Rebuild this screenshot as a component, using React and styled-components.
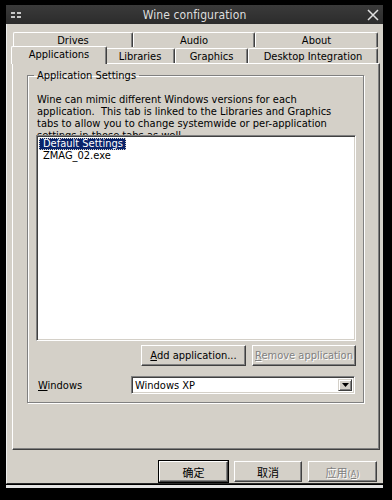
import React from "react";
import styled, { createGlobalStyle } from "styled-components";

const GlobalStyle = createGlobalStyle`
  html, body {
    margin: 0;
    padding: 0;
    background: #000;
  }
  body {
    font-family: "DejaVu Sans Condensed", "DejaVu Sans", sans-serif;
    font-size: 11px;
    color: #000;
  }
`;

const Window = styled.div`
  width: 377px;
  margin: 5px 0 0 6px;
`;

const TitleBar = styled.div`
  height: 19px;
  display: flex;
  align-items: center;
  justify-content: space-between;
  padding: 0 4px 0 5px;
  background: linear-gradient(#3a3a3a, #2c2c2c);
  color: #dedede;
  font-size: 12px;
`;

const TitleText = styled.div`
  flex: 1;
  text-align: center;
  letter-spacing: 0.1px;
`;

const Body = styled.div`
  height: 460px;
  box-sizing: border-box;
  background: #d4d0c8;
  padding: 8px 3px 0 5px;
  border-left: 1px solid #ececec;
  border-bottom: 1px solid #2a2a2a;
  display: flex;
  flex-direction: column;
`;

const BottomStrip = styled.div`
  height: 3px;
  margin-top: 1px;
  background: #e4e4e4;
`;

const TabRow = styled.div`
  display: flex;
  align-items: flex-end;
  padding-left: ${(p) => p.$indent}px;
  height: ${(p) => p.$height}px;
  position: relative;
  z-index: ${(p) => p.$z};
`;

const Tab = styled.div`
  width: ${(p) => p.$w}px;
  height: ${(p) => (p.$active ? 18 : 15)}px;
  box-sizing: border-box;
  background: #d4d0c8;
  border-top: 1px solid #fff;
  border-left: 1px solid #fff;
  border-right: 1px solid #404040;
  box-shadow: inset -1px 0 0 #808080;
  border-radius: 2px 2px 0 0;
  display: flex;
  align-items: center;
  justify-content: center;
  padding-bottom: ${(p) => (p.$active ? 2 : 0)}px;
  margin: 0 ${(p) => (p.$active ? -2 : 0)}px ${(p) => (p.$active ? -1 : 0)}px;
  position: relative;
  z-index: ${(p) => (p.$active ? 2 : 1)};
`;

const Pane = styled.div`
  height: 387px;
  box-sizing: border-box;
  border-top: 1px solid #fff;
  border-left: 1px solid #fff;
  border-right: 1px solid #404040;
  border-bottom: 1px solid #404040;
  box-shadow: inset -1px -1px 0 #808080;
  padding: 5px 15px 0 14px;
  position: relative;
  z-index: 1;
`;

const Group = styled.fieldset`
  margin: 0;
  height: 334px;
  box-sizing: border-box;
  border: 1px solid #808080;
  box-shadow: 1px 1px 0 #fff, inset 1px 1px 0 #fff;
  padding: 12px 7px 0 8px;
  display: flex;
  flex-direction: column;
`;

const Legend = styled.legend`
  padding: 0 3px;
  margin-left: -2px;
`;

const Description = styled.div`
  height: 41px;
  overflow: hidden;
  line-height: 12px;
  padding-left: 1px;
`;

const ListBox = styled.div`
  height: 206px;
  box-sizing: border-box;
  background: #fff;
  border-top: 1px solid #808080;
  border-left: 1px solid #808080;
  border-right: 1px solid #fff;
  border-bottom: 1px solid #fff;
  box-shadow: inset 1px 1px 0 #404040, inset -1px -1px 0 #d4d0c8;
  padding: 2px 2px;
  display: flex;
  flex-direction: column;
  align-items: flex-start;
`;

const ListItem = styled.div`
  height: 12px;
  line-height: 12px;
  padding: 0 3px 0 4px;
  background: ${(p) => (p.$selected ? "#0a246a" : "transparent")};
  color: ${(p) => (p.$selected ? "#fff" : "#000")};
  outline: ${(p) => (p.$selected ? "1px dotted #d4d0c8" : "none")};
  outline-offset: -1px;
`;

const ButtonRow = styled.div`
  display: flex;
  justify-content: flex-end;
  gap: ${(p) => p.$gap}px;
  margin-top: ${(p) => p.$top}px;
  padding-right: ${(p) => p.$right}px;
`;

const Button = styled.div`
  width: ${(p) => p.$w}px;
  height: ${(p) => p.$h}px;
  box-sizing: border-box;
  display: flex;
  align-items: center;
  justify-content: center;
  background: #d4d0c8;
  border-top: 1px solid #fff;
  border-left: 1px solid #fff;
  border-right: 1px solid #404040;
  border-bottom: 1px solid #404040;
  box-shadow: inset -1px -1px 0 #808080;
  outline: ${(p) => (p.$default ? "1px solid #000" : "none")};
  color: ${(p) => (p.$disabled ? "#808080" : "#000")};
  text-shadow: ${(p) => (p.$disabled ? "1px 1px 0 #fff" : "none")};
  font-family: ${(p) =>
    p.$cjk
      ? '"Noto Sans CJK SC", "DejaVu Sans Condensed", sans-serif'
      : "inherit"};
`;

const SmallParen = styled.span`
  font-family: "DejaVu Sans Condensed", "DejaVu Sans", sans-serif;
  font-size: 9px;
`;

const Key = styled.span`
  text-decoration: underline;
`;

const FieldRow = styled.div`
  display: flex;
  align-items: center;
  margin-top: 10px;
  padding-left: 2px;
  padding-right: 1px;
`;

const FieldLabel = styled.div`
  width: 93px;
`;

const Select = styled.div`
  flex: 1;
  height: 18px;
  box-sizing: border-box;
  background: #fff;
  border-top: 1px solid #808080;
  border-left: 1px solid #808080;
  border-right: 1px solid #fff;
  border-bottom: 1px solid #fff;
  box-shadow: inset 1px 1px 0 #404040, inset -1px -1px 0 #d4d0c8;
  display: flex;
  align-items: center;
  padding: 0 2px 0 2px;
`;

const SelectValue = styled.div`
  flex: 1;
  padding-left: 1px;
`;

const ArrowButton = styled.div`
  width: 14px;
  height: 12px;
  box-sizing: border-box;
  background: #d4d0c8;
  border-top: 1px solid #d4d0c8;
  border-left: 1px solid #d4d0c8;
  border-right: 1px solid #404040;
  border-bottom: 1px solid #404040;
  box-shadow: inset 1px 1px 0 #fff, inset -1px -1px 0 #808080;
  display: flex;
  align-items: center;
  justify-content: center;
`;

const Spacer = styled.div`
  flex: 1;
`;

const MenuIcon = () => (
  <svg width="11" height="6" viewBox="0 0 11 6">
    <rect x="0" y="0" width="4" height="2" fill="#c8c8c8" />
    <rect x="6" y="0" width="4" height="2" fill="#c8c8c8" />
    <rect x="0" y="4" width="4" height="2" fill="#c8c8c8" />
    <rect x="6" y="4" width="4" height="2" fill="#c8c8c8" />
  </svg>
);

const CloseIcon = () => (
  <svg width="12" height="12" viewBox="0 0 12 12">
    <path d="M1 1 L11 11 M11 1 L1 11" stroke="#e0e0e0" strokeWidth="1.5" />
  </svg>
);

const backTabs = [
  { label: "Drives", w: 120 },
  { label: "Audio", w: 122 },
  { label: "About", w: 123 },
];

const frontTabs = [
  { label: "Applications", w: 96, active: true },
  { label: "Libraries", w: 70 },
  { label: "Graphics", w: 73 },
  { label: "Desktop Integration", w: 130 },
];

const App = () => {
  return (
    <>
      <GlobalStyle />
      <Window>
        <TitleBar>
          <MenuIcon />
          <TitleText>Wine configuration</TitleText>
          <CloseIcon />
        </TitleBar>
        <Body>
          <TabRow $indent={1} $height={15} $z={0}>
            {backTabs.map((t) => (
              <Tab key={t.label} $w={t.w}>
                {t.label}
              </Tab>
            ))}
          </TabRow>
          <TabRow $indent={1} $height={16} $z={2}>
            {frontTabs.map((t) => (
              <Tab key={t.label} $w={t.w} $active={t.active}>
                {t.label}
              </Tab>
            ))}
          </TabRow>
          <Pane>
            <Group>
              <Legend>Application Settings</Legend>
              <Description>
                Wine can mimic different Windows versions for each
                <br />
                application.&nbsp; This tab is linked to the Libraries and
                Graphics
                <br />
                tabs to allow you to change systemwide or per-application
                <br />
                settings in those tabs as well.
              </Description>
              <ListBox>
                <ListItem $selected>Default Settings</ListItem>
                <ListItem>ZMAG_02.exe</ListItem>
              </ListBox>
              <ButtonRow $gap={6} $top={4} $right={0}>
                <Button $w={105} $h={21}>
                  <span>
                    <Key>A</Key>dd application...
                  </span>
                </Button>
                <Button $w={104} $h={21} $disabled>
                  <span>
                    <Key>R</Key>emove application
                  </span>
                </Button>
              </ButtonRow>
              <FieldRow>
                <FieldLabel>
                  <Key>W</Key>indows
                </FieldLabel>
                <Select>
                  <SelectValue>Windows XP</SelectValue>
                  <ArrowButton>
                    <svg width="7" height="4" viewBox="0 0 7 4">
                      <path d="M0 0 H7 L3.5 4 Z" fill="#000" />
                    </svg>
                  </ArrowButton>
                </Select>
              </FieldRow>
            </Group>
          </Pane>
          <ButtonRow $gap={6} $top={11} $right={3}>
            <Button $w={69} $h={21} $cjk $default>
              确定
            </Button>
            <Button $w={68} $h={21} $cjk>
              取消
            </Button>
            <Button $w={69} $h={21} $cjk $disabled>
              <span>
                应用<SmallParen>(</SmallParen>
                <Key>
                  <SmallParen>A</SmallParen>
                </Key>
                <SmallParen>)</SmallParen>
              </span>
            </Button>
          </ButtonRow>
          <Spacer />
        </Body>
        <BottomStrip />
      </Window>
    </>
  );
};

export default App;
